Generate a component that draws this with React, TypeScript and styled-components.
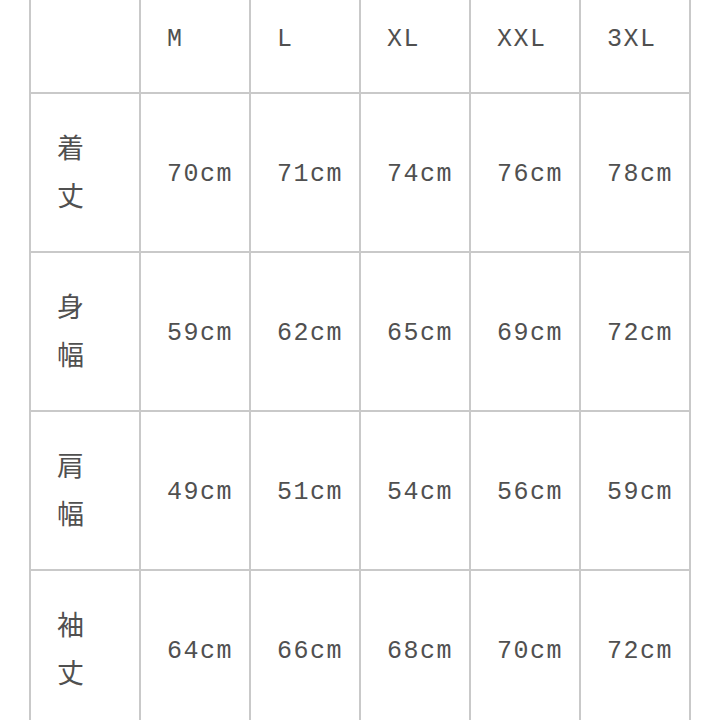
import React from 'react';
import styled, { createGlobalStyle } from 'styled-components';

const GlobalStyle = createGlobalStyle`
    html, body {
        margin: 0;
        padding: 0;
        background: #ffffff;
        overflow: hidden;
    }
`;

const sizes = ['M', 'L', 'XL', 'XXL', '3XL'];

const rows = [
    { label: ['着', '丈'], values: ['70cm', '71cm', '74cm', '76cm', '78cm'] },
    { label: ['身', '幅'], values: ['59cm', '62cm', '65cm', '69cm', '72cm'] },
    { label: ['肩', '幅'], values: ['49cm', '51cm', '54cm', '56cm', '59cm'] },
    { label: ['袖', '丈'], values: ['64cm', '66cm', '68cm', '70cm', '72cm'] },
];

export default function App() {
    return (
        <>
            <GlobalStyle />
            <Page>
                <SizeGrid>
                    <HeaderCell />
                    {sizes.map((s) => (
                        <HeaderCell key={s}>{s}</HeaderCell>
                    ))}
                    {rows.map((row) => (
                        <React.Fragment key={row.label.join('')}>
                            <LabelCell>
                                {row.label.map((ch) => (
                                    <span key={ch}>{ch}</span>
                                ))}
                            </LabelCell>
                            {row.values.map((v, i) => (
                                <ValueCell key={i}>{v}</ValueCell>
                            ))}
                        </React.Fragment>
                    ))}
                </SizeGrid>
            </Page>
        </>
    );
}

const Page = styled.div`
    width: 720px;
    height: 720px;
    overflow: hidden;
    padding-left: 29px;
    box-sizing: border-box;
`;

const SizeGrid = styled.div`
    display: grid;
    grid-template-columns: repeat(6, 110px);
    grid-template-rows: 94px repeat(4, 159px);
    width: max-content;
    border-left: 2px solid #c9c9c9;
`;

const Cell = styled.div`
    box-sizing: border-box;
    border-right: 2px solid #c9c9c9;
    border-bottom: 2px solid #c9c9c9;
    padding-left: 26px;
    color: #505050;
`;

const HeaderCell = styled(Cell)`
    padding-top: 25px;
    font-family: 'Liberation Mono', monospace;
    font-size: 25px;
    letter-spacing: 1.5px;
    line-height: 30px;
`;

const ValueCell = styled(Cell)`
    display: flex;
    align-items: center;
    font-family: 'Liberation Mono', monospace;
    font-size: 25px;
    letter-spacing: 1.5px;
    padding-top: 3px;
`;

const LabelCell = styled(Cell)`
    display: flex;
    flex-direction: column;
    justify-content: center;
    padding-bottom: 4px;
    font-family: 'Noto Sans CJK JP', sans-serif;
    font-size: 27px;
    line-height: 48px;
`;
